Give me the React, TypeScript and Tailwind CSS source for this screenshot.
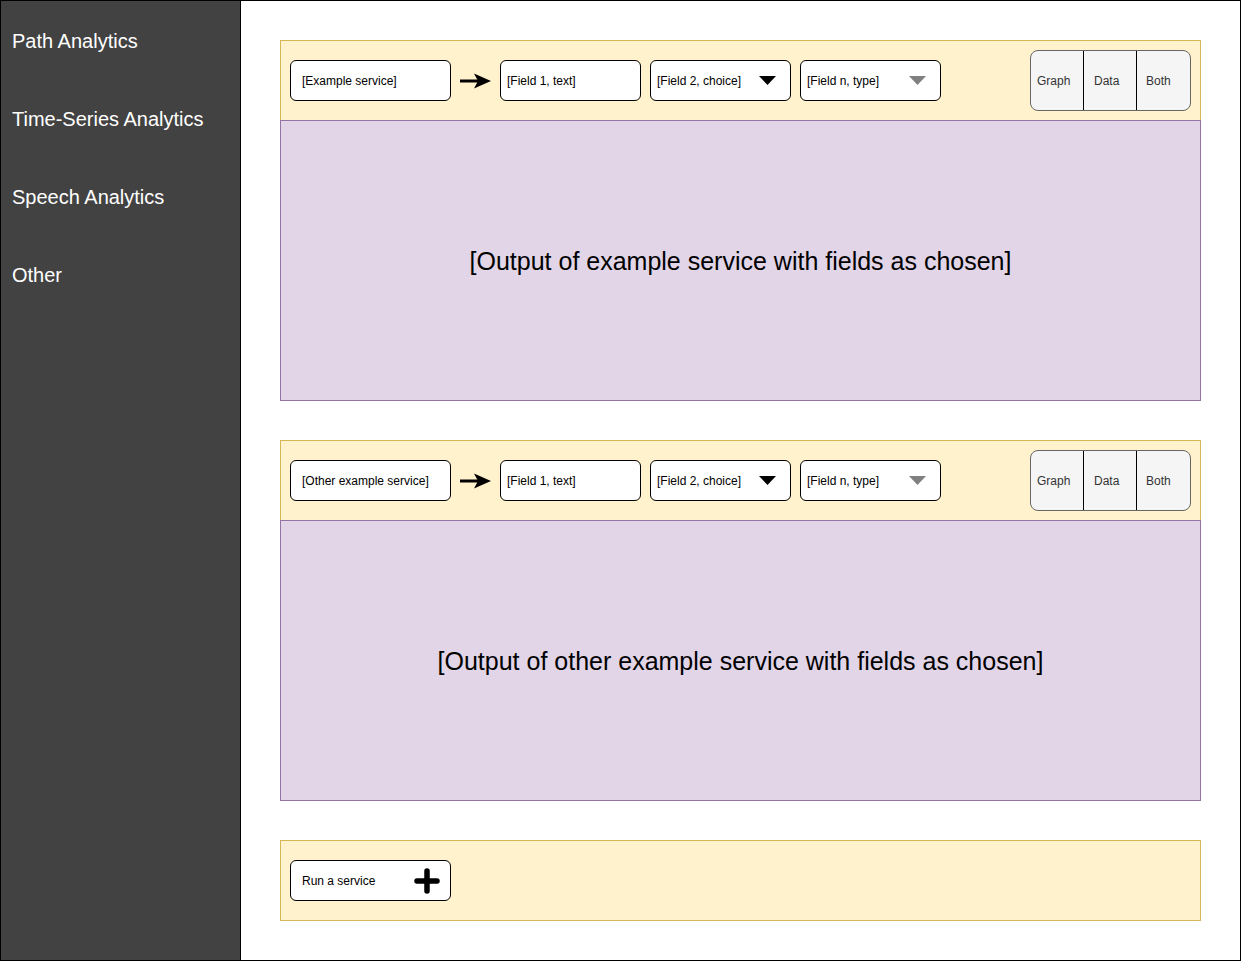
const font = { fontFamily: '"Liberation Sans", Arial, sans-serif' };

const navItems = ["Path Analytics", "Time-Series Analytics", "Speech Analytics", "Other"];

const Arrow = () => (
	<svg width="31" height="16" viewBox="0 0 31 16" className="mx-[9px] shrink-0">
		<rect x="0" y="6.5" width="22" height="3" fill="#000" />
		<path d="M14 0.5 L31 8 L14 15.5 L18 8 Z" fill="#000" />
	</svg>
);

const Triangle = ({ color }: { color: string }) => (
	<svg width="17" height="9" viewBox="0 0 17 9" className="shrink-0">
		<path d="M0 0 L17 0 L8.5 9 Z" fill={color} />
	</svg>
);

const Box = ({ children, className = "" }: { children: React.ReactNode; className?: string }) => (
	<div
		className={`h-[41px] bg-white border border-black rounded-[6px] flex items-center text-[12px] text-black shrink-0 ${className}`}
	>
		{children}
	</div>
);

const ViewToggle = () => (
	<div className="ml-auto mr-[9px] w-[161px] h-[61px] border border-[#666666] rounded-[8px] bg-[#f5f5f5] flex text-[12px] text-[#333333] overflow-hidden">
		<div className="w-[52px] flex items-center pl-[6px]">Graph</div>
		<div className="w-[53px] border-l border-black flex items-center pl-[10px]">Data</div>
		<div className="flex-1 border-l border-black flex items-center pl-[9px]">Both</div>
	</div>
);

const ServicePanel = ({ service, output }: { service: string; output: string }) => (
	<div className="w-[921px]">
		<div className="h-[81px] bg-[#fff2cc] border border-[#d6b656] flex items-center pl-[9px]">
			<Box className="w-[161px] pl-[11px]">{service}</Box>
			<Arrow />
			<Box className="w-[141px] pl-[6px]">[Field 1, text]</Box>
			<Box className="w-[141px] pl-[6px] pr-[14px] justify-between ml-[9px]">
				<span>[Field 2, choice]</span>
				<Triangle color="#000000" />
			</Box>
			<Box className="w-[141px] pl-[6px] pr-[14px] justify-between ml-[9px]">
				<span>[Field n, type]</span>
				<Triangle color="#808080" />
			</Box>
			<ViewToggle />
		</div>
		<div className="-mt-px h-[281px] pt-[2px] bg-[#e1d5e7] border border-[#9673a6] flex items-center justify-center text-[25px] text-black">
			{output}
		</div>
	</div>
);

export default function App() {
	return (
		<div style={font} className="w-[1241px] h-[961px] border border-black flex bg-white overflow-hidden">
			<nav className="w-[240px] shrink-0 h-full bg-[#424242] border-r border-black flex flex-col">
				{navItems.map((item, i) => (
					<div
						key={item}
						className={`${i === 0 ? "h-[79px]" : "h-[78px]"} flex items-center pl-[11px] text-[20px] text-white`}
					>
						{item}
					</div>
				))}
			</nav>

			<main className="flex-1 pt-[39px] pl-[39px] flex flex-col gap-[39px]">
				<ServicePanel service="[Example service]" output="[Output of example service with fields as chosen]" />
				<ServicePanel
					service="[Other example service]"
					output="[Output of other example service with fields as chosen]"
				/>

				{/* 新しいサービスを追加 */}
				<div className="w-[921px] h-[81px] bg-[#fff2cc] border border-[#d6b656] flex items-center pl-[9px]">
					<Box className="w-[161px] pl-[11px] pr-[10px] justify-between">
						<span>Run a service</span>
						<svg width="26" height="26" viewBox="0 0 26 26">
							<path d="M13 3 V23 M3 13 H23" stroke="#000" strokeWidth="5.5" strokeLinecap="round" />
						</svg>
					</Box>
				</div>
			</main>
		</div>
	);
}
